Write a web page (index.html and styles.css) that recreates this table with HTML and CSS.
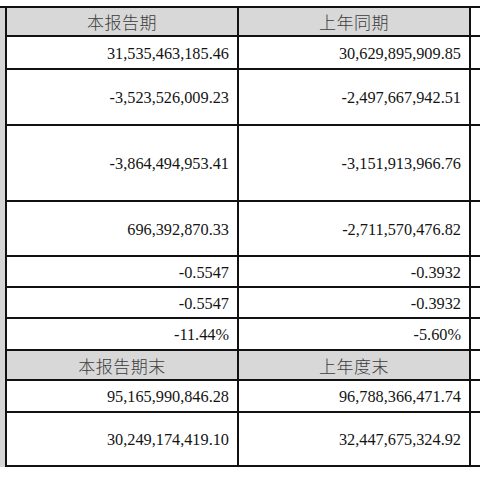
FILE: index.html
```html
<!DOCTYPE html>
<html lang="zh-CN">
<head>
<meta charset="utf-8">
<title>主要会计数据</title>
<link rel="stylesheet" href="styles.css">
</head>
<body>
<table class="sheet">
  <colgroup>
    <col class="c-strip">
    <col class="c-val">
    <col class="c-val">
    <col class="c-rest">
  </colgroup>
  <tbody>
    <tr class="r-head first">
      <td class="strip"></td>
      <td class="head">本报告期</td>
      <td class="head">上年同期</td>
      <td class="rest"></td>
    </tr>
    <tr class="h33">
      <td class="strip"></td>
      <td class="num">31,535,463,185.46</td>
      <td class="num">30,629,895,909.85</td>
      <td class="rest"></td>
    </tr>
    <tr class="h56">
      <td class="strip"></td>
      <td class="num">-3,523,526,009.23</td>
      <td class="num">-2,497,667,942.51</td>
      <td class="rest"></td>
    </tr>
    <tr class="h76">
      <td class="strip"></td>
      <td class="num">-3,864,494,953.41</td>
      <td class="num">-3,151,913,966.76</td>
      <td class="rest"></td>
    </tr>
    <tr class="h55">
      <td class="strip"></td>
      <td class="num">696,392,870.33</td>
      <td class="num">-2,711,570,476.82</td>
      <td class="rest"></td>
    </tr>
    <tr class="h31">
      <td class="strip"></td>
      <td class="num">-0.5547</td>
      <td class="num">-0.3932</td>
      <td class="rest"></td>
    </tr>
    <tr class="h31">
      <td class="strip"></td>
      <td class="num">-0.5547</td>
      <td class="num">-0.3932</td>
      <td class="rest"></td>
    </tr>
    <tr class="h32">
      <td class="strip"></td>
      <td class="num">-11.44%</td>
      <td class="num">-5.60%</td>
      <td class="rest"></td>
    </tr>
    <tr class="h30">
      <td class="strip"></td>
      <td class="head">本报告期末</td>
      <td class="head">上年度末</td>
      <td class="rest"></td>
    </tr>
    <tr class="h32">
      <td class="strip"></td>
      <td class="num">95,165,990,846.28</td>
      <td class="num">96,788,366,471.74</td>
      <td class="rest"></td>
    </tr>
    <tr class="h54">
      <td class="strip"></td>
      <td class="num">30,249,174,419.10</td>
      <td class="num">32,447,675,324.92</td>
      <td class="rest"></td>
    </tr>
  </tbody>
</table>
</body>
</html>
```

FILE: styles.css
```css
html, body {
  margin: 0;
  padding: 0;
  background: #ffffff;
  overflow: hidden;
}

body {
  width: 480px;
  height: 480px;
}

.sheet {
  margin-top: 6px;
  border-collapse: separate;
  border-spacing: 0;
  table-layout: fixed;
  width: 480px;
  font-family: "Liberation Serif", "Noto Sans CJK SC", serif;
  color: #141414;
}

.c-strip { width: 7px; }
.c-val { width: 232px; }
.c-rest { width: 9px; }

.sheet td {
  box-sizing: border-box;
  padding: 0;
  border-bottom: 2px solid #111111;
  border-right: 2px solid #111111;
  vertical-align: middle;
  white-space: nowrap;
  overflow: hidden;
}

.sheet tr.first td {
  border-top: 2px solid #111111;
}

.sheet td.strip {
  background: #d5d5d5;
  border-bottom: none;
  border-top: none;
}

.sheet td.rest {
  border-right: none;
  background: #ffffff;
}

.sheet td.head {
  background: #d8d8d8;
  text-align: center;
  font-family: "Noto Sans CJK SC", sans-serif;
  font-weight: 300;
  font-size: 17px;
  color: #3c3c3c;
  letter-spacing: 0.5px;
}

.sheet td.num {
  text-align: right;
  padding-right: 8px;
  font-size: 16.3px;
  padding-top: 2px;
}

.r-head td { height: 31px; }
.h30 td { height: 30px; }
.h31 td { height: 31px; }
.h32 td { height: 32px; }
.h33 td { height: 33px; }
.h54 td { height: 54px; }
.h55 td { height: 55px; }
.h56 td { height: 56px; }
.h76 td { height: 76px; }
```
